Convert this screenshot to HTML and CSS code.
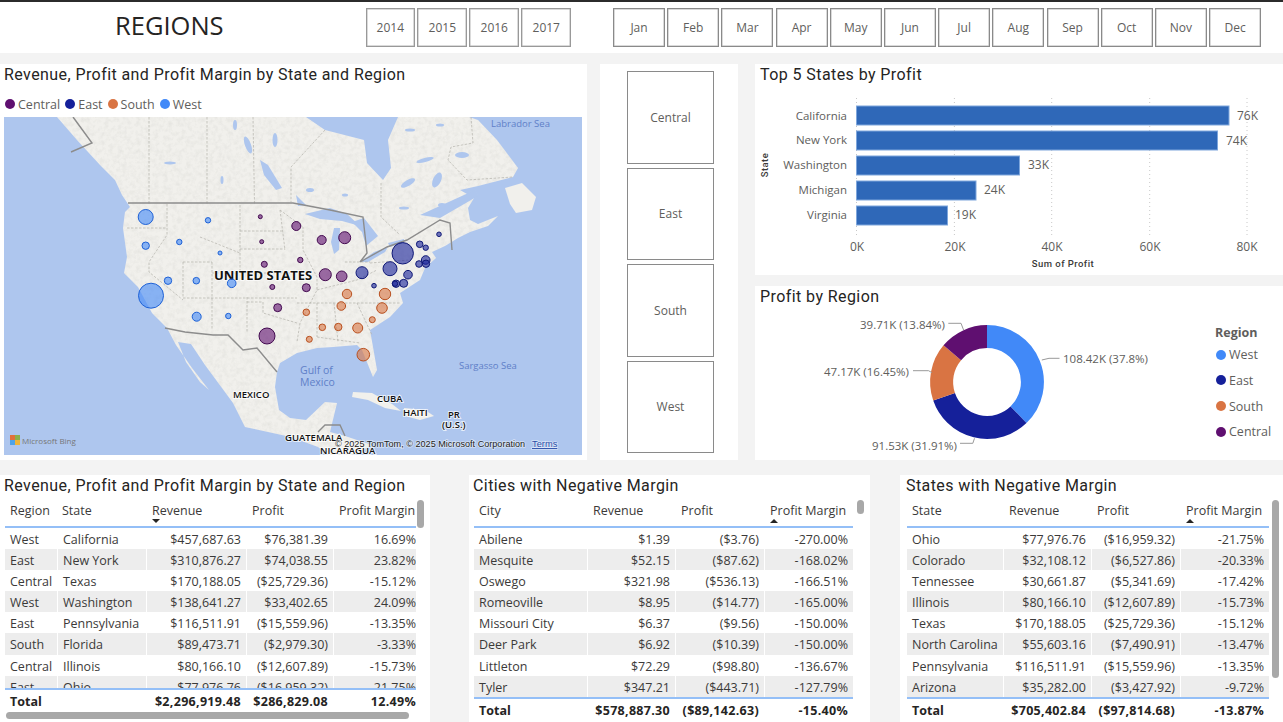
FILE: index.html
```html
<!DOCTYPE html>
<html lang="en">
<head>
    <meta charset="UTF-8">
    <title>Regions</title>
    <link rel="stylesheet" href="styles.css">
</head>
<body>
    <header class="topbar">
        <div class="page-title">REGIONS</div>
        <div class="slicer-row years">
            <div class="chip">2014</div><div class="chip">2015</div><div class="chip">2016</div><div class="chip">2017</div>
        </div>
        <div class="slicer-row months">
            <div class="chip">Jan</div><div class="chip">Feb</div><div class="chip">Mar</div><div class="chip">Apr</div><div class="chip">May</div><div class="chip">Jun</div><div class="chip">Jul</div><div class="chip">Aug</div><div class="chip">Sep</div><div class="chip">Oct</div><div class="chip">Nov</div><div class="chip">Dec</div>
        </div>
    </header>

    <div class="middle">
        <section class="panel map-panel">
            <h2>Revenue, Profit and Profit Margin by State and Region</h2>
            <div class="map-legend">
                <span class="key"><i class="dot c-central"></i>Central</span>
                <span class="key"><i class="dot c-east"></i>East</span>
                <span class="key"><i class="dot c-south"></i>South</span>
                <span class="key"><i class="dot c-west"></i>West</span>
            </div>
            <svg class="map" viewBox="4 117 578 338">
                <defs>
                    <filter id="soft"><feGaussianBlur stdDeviation="0.45"/></filter>
                    <filter id="terrain">
                        <feTurbulence type="fractalNoise" baseFrequency="0.22" numOctaves="3" seed="4"/>
                        <feColorMatrix values="0 0 0 0 0.6  0 0 0 0 0.6  0 0 0 0 0.57  1.5 0 0 0 -0.62"/>
                    </filter>
                    <path id="mainland" d="M57 117 L77 140 L100 165 L115 180 L122 195 L130 207 L125 212 L123 228 L127 257 L124 273 L138 287 L152 313 L167 328 L176 345 L192 368 L209 390 L200 382 L186 362 L178 342 L191 344 L205 365 L222 388 L233 403 L245 427 L291 437 L318 447 L329 455 L352 455 L372 445 L345 436 L330 432 L337 403 L325 402 L306 420 L290 418 L279 410 L275 387 L277 372 L280 363 L297 353 L317 348 L333 347 L357 345 L362 350 L373 377 L377 370 L373 347 L370 330 L390 317 L403 303 L400 293 L420 280 L425 268 L436 258 L432 252 L445 246 L458 238 L470 232 L488 226 L498 216 L478 224 L470 220 L468 208 L474 198 L460 190 L478 186 L513 177 L518 168 L497 140 L478 120 L469 117Z"/>
                    <clipPath id="land-clip"><use href="#mainland"/></clipPath>
                </defs>
                <rect x="4" y="117" width="578" height="338" class="water"/>
                <g filter="url(#soft)">
                    <!-- north america -->
                    <use href="#mainland" class="land"/>
                    <path class="land" d="M505 188 L522 183 L536 197 L532 210 L516 213 L510 204Z"/>
                    <path class="land" d="M353 392 L372 393 L392 404 L401 411 L385 408 L368 400 L352 397Z"/>
                    <path class="land" d="M404 408 L425 410 L434 416 L420 420 L405 416Z"/>
                    <rect x="4" y="117" width="578" height="338" class="terrain" clip-path="url(#land-clip)" filter="url(#terrain)"/>
                    <!-- hudson bay and lakes -->
                    <path class="water" d="M306 117 L325 130 L364 140 L367 163 L383 180 L391 168 L388 140 L398 117Z"/>
                    <path class="water" d="M305 214 L330 208 L347 214 L360 226 L342 221 L320 219Z"/>
                    <path class="water" d="M334 228 L340 228 L339 250 L334 254 L331 242Z"/>
                    <path class="water" d="M352 222 L364 218 L378 236 L366 246 L362 232Z"/>
                    <path class="water" d="M360 262 L374 252 L388 247 L385 252 L368 262Z"/>
                    <path class="water" d="M388 243 L404 239 L404 243 L390 247Z"/>
                    <path class="water" d="M260 160 L268 165 L282 188 L276 190 L264 175Z"/>
                    <path class="water" d="M296 195 L306 205 L298 206Z"/>
                    <path class="water" d="M420 215 L475 190 L478 196 L440 218Z"/>
                    <ellipse class="water" cx="170" cy="163" rx="6" ry="1.5"/>
                    <ellipse class="water" cx="248" cy="145" rx="3" ry="9" transform="rotate(-20 248 145)"/>
                    <ellipse class="water" cx="275" cy="140" rx="2.5" ry="7"/>
                    <ellipse class="water" cx="408" cy="183" rx="8" ry="3" transform="rotate(-30 408 183)"/>
                    <ellipse class="water" cx="437" cy="180" rx="4" ry="8" transform="rotate(25 437 180)"/>
                    <ellipse class="water" cx="462" cy="155" rx="7" ry="3"/>
                    <ellipse class="water" cx="425" cy="160" rx="9" ry="2" transform="rotate(-15 425 160)"/>
                    <ellipse class="water" cx="235" cy="125" rx="2" ry="5"/>
                    <ellipse class="water" cx="222" cy="180" rx="1.5" ry="4"/>
                    <ellipse class="water" cx="310" cy="190" rx="4" ry="2"/>
                    <ellipse class="water" cx="345" cy="195" rx="3" ry="1.5"/>
                    <ellipse class="water" cx="404" cy="208" rx="5" ry="1.5"/>
                    <ellipse class="water" cx="442" cy="205" rx="4" ry="2"/>
                    <ellipse class="water" cx="410" cy="130" rx="5" ry="1.5"/>
                    <ellipse class="water" cx="440" cy="125" rx="4" ry="1.5"/>
                    <!-- province and state lines -->
                    <path class="line" d="M149 117V204M207 117V204M253 117L254.5 204M325 130L291 167V202M381 183V217L400 235M471 117L473 143L451 147L448 160L467 180L513 177"/>
                    <path class="line" d="M167 204V235L149 262V272L183 300M127 228H167M183 262H212M212 262V330M183 262V298M183 298H297M200 237L240 253M240 205V273M212 273H290M240 231H282M240 249H285M280 210L303 227V250L317 277V290L300 323L297 342M280 210L285 250M247 297V333M247 302H263V313L297 323M317 290L357 280L377 270M297 303H400M317 303V337M334 303L338 342M357 303L372 335M317 337L360 343M370 263L410 260M345 262H370"/>
                    <!-- country borders -->
                    <path class="border" d="M73 117L92 143L71 152M128 203L293 203L330 210L363 217L367 253L360 262L387 247L407 240L440 220L450 223L452 250"/>
                    <path class="border" d="M165 328L185 332L213 335L228 335L243 350L257 348L277 372"/>
                    <path class="border" d="M318 432L325 425L340 425L345 436"/>
                </g>

                <text class="sea" x="491" y="127">Labrador Sea</text>
                <text class="sea" x="459" y="369">Sargasso Sea</text>
                <text class="sea gulf" x="300" y="374">Gulf of</text>
                <text class="sea gulf" x="300" y="386">Mexico</text>
                <text class="place big" x="214" y="280">UNITED STATES</text>
                <text class="place" x="233" y="398">MEXICO</text>
                <text class="place" x="377" y="402">CUBA</text>
                <text class="place" x="403" y="416">HAITI</text>
                <text class="place" x="448" y="418">PR</text>
                <text class="place" x="442" y="428">(U.S.)</text>
                <text class="place" x="285" y="441">GUATEMALA</text>
                <text class="place" x="320" y="454">NICARAGUA</text>

                <g class="bubble west">
                    <circle cx="145.7" cy="217" r="7.5"/><circle cx="208" cy="220.3" r="2.7"/><circle cx="145.7" cy="245.7" r="3.7"/><circle cx="179.3" cy="242" r="2.7"/><circle cx="220" cy="253" r="2"/><circle cx="168" cy="280.7" r="3.7"/><circle cx="196.3" cy="280.7" r="3.3"/><circle cx="231.7" cy="283.3" r="4.3"/><circle cx="151" cy="295.7" r="12.5"/><circle cx="196.7" cy="316.7" r="4.5"/><circle cx="228.3" cy="316" r="2.7"/>
                </g>
                <g class="bubble central">
                    <circle cx="260.3" cy="216.7" r="2"/><circle cx="296.3" cy="226" r="4.5"/><circle cx="261.7" cy="241.7" r="2"/><circle cx="321.7" cy="240" r="4.5"/><circle cx="344.7" cy="237.7" r="6"/><circle cx="300.3" cy="260" r="2.7"/><circle cx="264.3" cy="264.3" r="3"/><circle cx="325.3" cy="274.7" r="6"/><circle cx="341.7" cy="276.3" r="5.3"/><circle cx="272.3" cy="287" r="2.5"/><circle cx="306.3" cy="287.7" r="4"/><circle cx="277.7" cy="307.7" r="4"/><circle cx="267" cy="336" r="8"/>
                </g>
                <g class="bubble east">
                    <circle cx="439" cy="234.3" r="2.3"/><circle cx="419.7" cy="244.3" r="3.3"/><circle cx="425.7" cy="247.7" r="2.7"/><circle cx="402.7" cy="253.3" r="10.7"/><circle cx="425.7" cy="260" r="4.3"/><circle cx="426" cy="263.7" r="3.7"/><circle cx="419" cy="264" r="3.3"/><circle cx="390" cy="268.7" r="7"/><circle cx="408" cy="274.7" r="4.3"/><circle cx="362" cy="272.7" r="6"/><circle cx="403.7" cy="283.3" r="4"/><circle cx="396" cy="283.7" r="3.7"/><circle cx="395" cy="283.7" r="2.7"/><circle cx="374" cy="285.7" r="2.3"/>
                </g>
                <g class="bubble south">
                    <circle cx="347" cy="294" r="4.7"/><circle cx="385" cy="294" r="5.7"/><circle cx="341.3" cy="306" r="4.3"/><circle cx="382" cy="308" r="5.3"/><circle cx="306.3" cy="312.3" r="3.3"/><circle cx="372.3" cy="319.7" r="3"/><circle cx="322.3" cy="327.3" r="3.3"/><circle cx="338.3" cy="327" r="3.7"/><circle cx="357.7" cy="328" r="5"/><circle cx="309.3" cy="339.3" r="3"/><circle cx="363.3" cy="354.7" r="6.3"/>
                </g>

                <rect x="10" y="435" width="5" height="5" fill="#e2703a"/><rect x="15" y="435" width="5" height="5" fill="#8cb04a"/><rect x="10" y="440" width="5" height="5" fill="#4fa3e8"/><rect x="15" y="440" width="5" height="5" fill="#eeb53a"/>
                <text class="bing" x="22" y="444">Microsoft Bing</text>
                <text class="credit" x="335" y="447">© 2025 TomTom, © 2025 Microsoft Corporation</text>
                <text class="terms" x="532" y="447">Terms</text>
            </svg>
        </section>

        <section class="panel region-panel">
            <div class="region-btn">Central</div>
            <div class="region-btn">East</div>
            <div class="region-btn">South</div>
            <div class="region-btn">West</div>
        </section>

        <div class="right-col">
            <section class="panel bar-panel">
                <h2>Top 5 States by Profit</h2>
                <svg class="bar-chart" viewBox="755 64 528 211">
                    <path class="grid" d="M856.5 98V237M954.4 98V237M1051.7 98V237M1149.7 98V237M1247 98V237"/>
                    <rect class="bar" x="856.5" y="106" width="372.5" height="19"/>
                    <rect class="bar" x="856.5" y="131" width="361" height="19"/>
                    <rect class="bar" x="856.5" y="156" width="163" height="19"/>
                    <rect class="bar" x="856.5" y="181" width="119.5" height="19"/>
                    <rect class="bar" x="856.5" y="206" width="91" height="19"/>
                    <g class="cat">
                        <text x="847" y="120">California</text>
                        <text x="847" y="144">New York</text>
                        <text x="847" y="169">Washington</text>
                        <text x="847" y="194">Michigan</text>
                        <text x="847" y="219">Virginia</text>
                    </g>
                    <g class="val">
                        <text x="1237" y="120">76K</text>
                        <text x="1226" y="145">74K</text>
                        <text x="1028" y="169">33K</text>
                        <text x="984" y="194">24K</text>
                        <text x="955" y="219">19K</text>
                    </g>
                    <g class="tick">
                        <text x="857" y="251">0K</text>
                        <text x="955" y="251">20K</text>
                        <text x="1052" y="251">40K</text>
                        <text x="1150" y="251">60K</text>
                        <text x="1247" y="251">80K</text>
                    </g>
                    <text class="axis" x="1063" y="267">Sum of Profit</text>
                    <text class="axis" transform="translate(768 165) rotate(-90)">State</text>
                </svg>
            </section>
            <section class="panel donut-panel">
                <h2>Profit by Region</h2>
                <svg class="donut" viewBox="755 286 440 174">
                    <g class="ring">
                        <path class="s-west" d="M987 336.6A45.4 45.4 0 0 1 1018.49 414.7"/>
                        <path class="s-east" d="M1018.49 414.7A45.4 45.4 0 0 1 944.08 396.81"/>
                        <path class="s-south" d="M944.08 396.81A45.4 45.4 0 0 1 952.31 352.71"/>
                        <path class="s-central" d="M952.31 352.71A45.4 45.4 0 0 1 987 336.6"/>
                    </g>
                    <path class="leader" d="M1041.8 360L1049 358.3H1059.5M960 443.3H972.8L974.5 438.3M913 370.7H928.6L932 372.7M948.3 323.3H961L963.6 330"/>
                    <g class="slice-label">
                        <text x="1063" y="363">108.42K (37.8%)</text>
                        <text x="872" y="450">91.53K (31.91%)</text>
                        <text x="824" y="376">47.17K (16.45%)</text>
                        <text x="860" y="329">39.71K (13.84%)</text>
                    </g>
                </svg>
                <div class="donut-legend">
                    <div class="legend-title">Region</div>
                    <span class="key"><i class="dot c-west"></i>West</span>
                    <span class="key"><i class="dot c-east"></i>East</span>
                    <span class="key"><i class="dot c-south"></i>South</span>
                    <span class="key"><i class="dot c-central"></i>Central</span>
                </div>
            </section>
        </div>
    </div>

    <div class="bottom">
        <section class="panel table-panel t-region">
            <h2>Revenue, Profit and Profit Margin by State and Region</h2>
            <div class="row head"><div class="l">Region</div><div class="l">State</div><div class="l sort down">Revenue</div><div class="l">Profit</div><div class="l">Profit Margin</div></div>
            <div class="rows">
                <div class="row"><div class="l">West</div><div class="l">California</div><div>$457,687.63</div><div>$76,381.39</div><div>16.69%</div></div>
                <div class="row"><div class="l">East</div><div class="l">New York</div><div>$310,876.27</div><div>$74,038.55</div><div>23.82%</div></div>
                <div class="row"><div class="l">Central</div><div class="l">Texas</div><div>$170,188.05</div><div>($25,729.36)</div><div>-15.12%</div></div>
                <div class="row"><div class="l">West</div><div class="l">Washington</div><div>$138,641.27</div><div>$33,402.65</div><div>24.09%</div></div>
                <div class="row"><div class="l">East</div><div class="l">Pennsylvania</div><div>$116,511.91</div><div>($15,559.96)</div><div>-13.35%</div></div>
                <div class="row"><div class="l">South</div><div class="l">Florida</div><div>$89,473.71</div><div>($2,979.30)</div><div>-3.33%</div></div>
                <div class="row"><div class="l">Central</div><div class="l">Illinois</div><div>$80,166.10</div><div>($12,607.89)</div><div>-15.73%</div></div>
                <div class="row"><div class="l">East</div><div class="l">Ohio</div><div>$77,976.76</div><div>($16,959.32)</div><div>-21.75%</div></div>
            </div>
            <div class="row total"><div class="l">Total</div><div></div><div>$2,296,919.48</div><div>$286,829.08</div><div>12.49%</div></div>
            <div class="vbar"></div>
            <div class="hbar"></div>
        </section>

        <section class="panel table-panel t-city">
            <h2>Cities with Negative Margin</h2>
            <div class="row head"><div class="l">City</div><div class="l">Revenue</div><div class="l">Profit</div><div class="l sort up">Profit Margin</div></div>
            <div class="rows">
                <div class="row"><div class="l">Abilene</div><div>$1.39</div><div>($3.76)</div><div>-270.00%</div></div>
                <div class="row"><div class="l">Mesquite</div><div>$52.15</div><div>($87.62)</div><div>-168.02%</div></div>
                <div class="row"><div class="l">Oswego</div><div>$321.98</div><div>($536.13)</div><div>-166.51%</div></div>
                <div class="row"><div class="l">Romeoville</div><div>$8.95</div><div>($14.77)</div><div>-165.00%</div></div>
                <div class="row"><div class="l">Missouri City</div><div>$6.37</div><div>($9.56)</div><div>-150.00%</div></div>
                <div class="row"><div class="l">Deer Park</div><div>$6.92</div><div>($10.39)</div><div>-150.00%</div></div>
                <div class="row"><div class="l">Littleton</div><div>$72.29</div><div>($98.80)</div><div>-136.67%</div></div>
                <div class="row"><div class="l">Tyler</div><div>$347.21</div><div>($443.71)</div><div>-127.79%</div></div>
            </div>
            <div class="row total"><div class="l">Total</div><div>$578,887.30</div><div>($89,142.63)</div><div>-15.40%</div></div>
            <div class="vbar"></div>
        </section>

        <section class="panel table-panel t-state">
            <h2>States with Negative Margin</h2>
            <div class="row head"><div class="l">State</div><div class="l">Revenue</div><div class="l">Profit</div><div class="l sort up">Profit Margin</div></div>
            <div class="rows">
                <div class="row"><div class="l">Ohio</div><div>$77,976.76</div><div>($16,959.32)</div><div>-21.75%</div></div>
                <div class="row"><div class="l">Colorado</div><div>$32,108.12</div><div>($6,527.86)</div><div>-20.33%</div></div>
                <div class="row"><div class="l">Tennessee</div><div>$30,661.87</div><div>($5,341.69)</div><div>-17.42%</div></div>
                <div class="row"><div class="l">Illinois</div><div>$80,166.10</div><div>($12,607.89)</div><div>-15.73%</div></div>
                <div class="row"><div class="l">Texas</div><div>$170,188.05</div><div>($25,729.36)</div><div>-15.12%</div></div>
                <div class="row"><div class="l">North Carolina</div><div>$55,603.16</div><div>($7,490.91)</div><div>-13.47%</div></div>
                <div class="row"><div class="l">Pennsylvania</div><div>$116,511.91</div><div>($15,559.96)</div><div>-13.35%</div></div>
                <div class="row"><div class="l">Arizona</div><div>$35,282.00</div><div>($3,427.92)</div><div>-9.72%</div></div>
            </div>
            <div class="row total"><div class="l">Total</div><div>$705,402.84</div><div>($97,814.68)</div><div>-13.87%</div></div>
            <div class="vbar"></div>
        </section>
    </div>
</body>
</html>
```
FILE: styles.css
```css
* {
    box-sizing: border-box;
}

body {
    margin: 0;
    width: 1283px;
    height: 722px;
    overflow: hidden;
    background-color: #f3f3f3;
    font-family: "Open Sans", "Noto Sans", sans-serif;
    color: #3b3a39;
}

h2 {
    margin: 0;
    font-family: Roboto, sans-serif;
    font-size: 16px;
    font-weight: 400;
    letter-spacing: 0.42px;
    line-height: 22px;
    color: #252423;
}

.panel {
    background-color: #fff;
}

/* top bar */
.topbar {
    display: flex;
    height: 53px;
    padding: 6px 0 0 115px;
    border-top: 2px solid #2b2b2b;
    background-color: #fff;
}

.page-title {
    width: 250.5px;
    height: 36px;
    font-size: 25.5px;
    line-height: 34px;
    color: #252423;
}

.slicer-row {
    display: flex;
    height: 39px;
}

.years {
    gap: 2.4px;
    width: 247.5px;
}

.years .chip {
    width: 49.6px;
    border-color: #999;
}

.months {
    gap: 2.2px;
}

.months .chip {
    width: 52px;
}

.chip {
    display: flex;
    align-items: center;
    justify-content: center;
    border: 1px solid #8a8a8a;
    box-shadow: inset 0 0 0 0.5px #b5b5b5;
    font-size: 12px;
    color: #605e5c;
}

/* middle row */
.middle {
    display: flex;
    height: 396px;
    margin-top: 11px;
}

.map-panel {
    width: 587px;
    padding: 0 5px 5px 4px;
}

.map-legend {
    display: flex;
    gap: 5px;
    height: 31px;
    padding: 10px 0 0 1px;
}

.key {
    display: flex;
    align-items: center;
    gap: 3px;
    height: 16px;
    font-size: 12.5px;
    color: #605e5c;
}

.dot {
    width: 10px;
    height: 10px;
    border-radius: 50%;
}

.c-central { background-color: #5f0f70; }
.c-east { background-color: #15209a; }
.c-south { background-color: #d97443; }
.c-west { background-color: #4189f8; }

.map {
    display: block;
    width: 578px;
    height: 338px;
}

.water { fill: #aec6ee; }
.land { fill: #f1f0ec; }
.terrain { opacity: 0.4; }
.line { fill: none; stroke: #b3b1aa; stroke-width: 0.7; stroke-dasharray: 2.5 1.5; }
.border { fill: none; stroke: #8c8c8c; stroke-width: 1.4; }

.bubble circle { stroke-width: 1; fill-opacity: 0.6; }
.bubble.west circle { fill: #4189f8; stroke: #1f62d6; }
.bubble.central circle { fill: #5f0f70; stroke: #430a50; }
.bubble.east circle { fill: #15209a; stroke: #0f1876; }
.bubble.south circle { fill: #d97443; stroke: #b9501f; }

.sea {
    font-family: "Open Sans", sans-serif;
    font-size: 9.5px;
    fill: #5f7fc8;
}

.gulf {
    font-size: 10.5px;
}

.place {
    font-family: "Open Sans", sans-serif;
    font-size: 9.5px;
    font-weight: 600;
    fill: #111;
    stroke: #fff;
    stroke-width: 2px;
    stroke-opacity: 0.7;
    paint-order: stroke;
}

.place.big {
    font-size: 13px;
    font-weight: 700;
}

.bing {
    font-family: "Open Sans", sans-serif;
    font-size: 8px;
    fill: #777;
}

.credit, .terms {
    font-family: "Liberation Sans", sans-serif;
    font-size: 9.1px;
    fill: #222;
    stroke: #fff;
    stroke-width: 1.5px;
    stroke-opacity: 0.5;
    paint-order: stroke;
}

.terms {
    font-size: 9.3px;
    fill: #2a4ea8;
    text-decoration: underline;
}

.region-panel {
    display: flex;
    flex-direction: column;
    gap: 4px;
    width: 138px;
    margin-left: 13px;
    padding: 7px 24px 7px 27px;
}

.region-btn {
    display: flex;
    flex: 1;
    align-items: center;
    justify-content: center;
    border: 1px solid #8a8a8a;
    font-size: 12px;
    color: #605e5c;
}

.right-col {
    display: flex;
    flex-direction: column;
    gap: 11px;
    width: 528px;
    margin-left: 17px;
}

.bar-panel {
    position: relative;
    height: 211px;
}

.bar-panel h2, .donut-panel h2 {
    padding-left: 5px;
}

.bar-chart {
    position: absolute;
    left: 0;
    top: 0;
    width: 528px;
    height: 211px;
}

.grid { fill: none; stroke: #c8c8c8; stroke-dasharray: 1 3; }
.bar { fill: #2f68b8; stroke: #7ea6dc; stroke-width: 1; }

.val text, .tick text {
    font-family: "Open Sans", sans-serif;
    font-size: 12px;
    fill: #605e5c;
}

.cat text {
    font-family: "Open Sans", sans-serif;
    font-size: 11.5px;
    fill: #605e5c;
    text-anchor: end;
}

.tick text { text-anchor: middle; }

.axis {
    font-family: Roboto, sans-serif;
    font-size: 9.5px;
    font-weight: 500;
    letter-spacing: 0.45px;
    text-anchor: middle;
    fill: #3b3a39;
}

.donut-panel {
    position: relative;
    display: flex;
    height: 174px;
}

.donut {
    position: absolute;
    left: 0;
    top: 0;
    width: 440px;
    height: 174px;
}

.ring path { fill: none; stroke-width: 23; }
.s-west { stroke: #4189f8; }
.s-east { stroke: #15209a; }
.s-south { stroke: #d97443; }
.s-central { stroke: #5f0f70; }
.leader { fill: none; stroke: #999; stroke-width: 1; }

.slice-label text {
    font-family: "Open Sans", sans-serif;
    font-size: 11.5px;
    fill: #605e5c;
}

.donut-legend {
    position: absolute;
    left: 461px;
    top: 38px;
    display: flex;
    flex-direction: column;
    gap: 9.7px;
}

.legend-title {
    height: 16px;
    margin-bottom: -3px;
    margin-left: -1px;
    font-size: 12.5px;
    font-weight: 700;
    color: #605e5c;
}

/* tables */
.bottom {
    display: flex;
    height: 247px;
    margin-top: 15px;
}

.table-panel {
    position: relative;
    padding-left: 5px;
}

.table-panel h2 {
    margin-left: -1px;
    height: 24px;
}

.t-region { width: 430px; }
.t-city { width: 401px; margin-left: 39px; }
.t-state { width: 383px; margin-left: 30px; padding-left: 7px; }
.t-state h2 { margin-left: -1px; }

.t-region .row { grid-template-columns: 52px 89px 100px 87px 83px; }
.t-city .row { grid-template-columns: 113px 88px 89px 89px; }
.t-state .row { grid-template-columns: 96px 88px 89px 89px; }

.row {
    display: grid;
    width: max-content;
    height: 21.1px;
    font-size: 12.5px;
    line-height: 23px;
}

.row > div {
    overflow: hidden;
    padding-right: 5px;
    white-space: nowrap;
    text-align: right;
}

.row > .l {
    padding-left: 5px;
    padding-right: 0;
    text-align: left;
}

.t-region .row > div:last-child {
    padding-right: 0;
}

.head > .l + .l {
    padding-left: 6px;
}

.t-region .head > .l:nth-child(2) {
    padding-left: 5px;
}

.head {
    height: 29px;
    border-bottom: 2px solid #94bff7;
    line-height: 23px;
    color: #3b3a39;
}

.sort {
    position: relative;
}

.sort::after {
    content: "";
    position: absolute;
    left: 6px;
    top: 20px;
    border-left: 4.5px solid transparent;
    border-right: 4.5px solid transparent;
}

.sort.down::after {
    border-top: 4px solid #252423;
}

.sort.up::after {
    border-bottom: 4px solid #252423;
}

.rows {
    height: 169px;
    overflow: hidden;
}

.t-region .rows {
    height: 160px;
}

.rows .row:nth-child(even) > div {
    background-color: #ededed;
}

.rows .row > div + div {
    border-left: 1px solid #fff;
}

.total {
    height: 24px;
    border-top: 2px solid #94bff7;
    font-weight: 700;
    line-height: 24px;
    color: #252423;
}

.total > div:not(.l) {
    letter-spacing: 0.3px;
}

.vbar {
    position: absolute;
    top: 25px;
    width: 7px;
    border-radius: 4px;
    background-color: #a8a8a8;
}

.t-region .vbar { left: 417px; height: 28px; }
.t-city .vbar { left: 388px; height: 14px; }
.t-state .vbar { left: 372px; height: 178px; }

.hbar {
    position: absolute;
    left: 6px;
    top: 237px;
    width: 403px;
    height: 7px;
    border-radius: 4px;
    background-color: #a8a8a8;
}
```
